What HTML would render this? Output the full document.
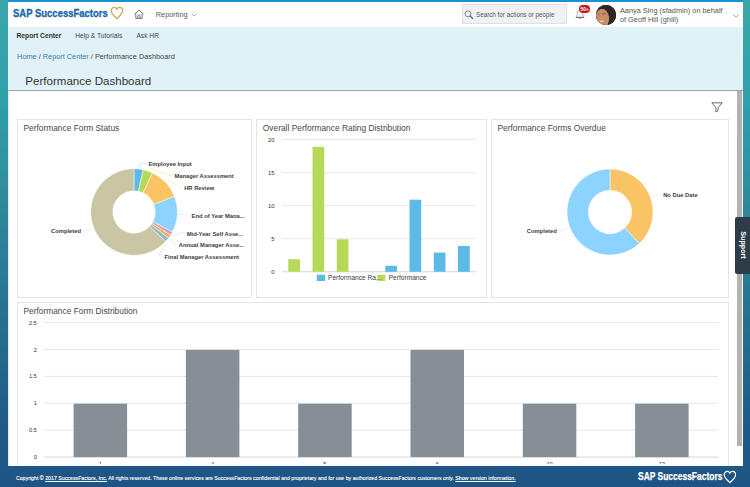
<!DOCTYPE html>
<html lang="en">
<head>
<meta charset="utf-8">
<title>Performance Dashboard</title>
<style>
html,body{margin:0;padding:0}
body{width:750px;height:487px;overflow:hidden;position:relative;font-family:"Liberation Sans",Arial,sans-serif;color:#333;
background:linear-gradient(to bottom,#3aa6aa 0px,#30a0ab 100px,#2e8a9d 200px,#28758f 300px,#215f88 400px,#1e5484 487px);}
.abs{position:absolute}
.t{position:absolute;white-space:nowrap;line-height:1;margin:0}
a{color:inherit}
u{text-decoration-thickness:0.4px;text-underline-offset:0.6px}
#topbar{left:8px;top:0;width:735px;height:2px;background:#1a90d5}
#header{left:8px;top:2px;width:735px;height:24.6px;background:#fff;border-bottom:0.6px solid #d5dadc}
#sub{left:8px;top:27px;width:735px;height:63px;background:#e0f2f7}
#panel{left:8px;top:90px;width:735px;height:376px;background:#fff;border-top:1px solid #9aa3a6;border-left:1px solid #e3e3ee;box-sizing:border-box;overflow:hidden}
#thumb{left:737px;top:91px;width:5px;height:355px;background:#b3b3b3}
.card{position:absolute;box-sizing:border-box;border:1px solid #e4e4e4;background:#fff}
.ctitle{font-size:8.4px;color:#484848}
#search{left:461.6px;top:4.3px;width:105.1px;height:20.1px;box-sizing:border-box;background:#f0f1f4;border:0.6px solid #e0e0e4}
#badge{left:579.2px;top:4.8px;width:10.9px;height:8.7px;border-radius:4.35px;background:#c5191d;color:#fff;font-size:4.8px;font-weight:bold;text-align:center;line-height:9.5px;overflow:hidden}
#avatar{left:596.1px;top:4.5px;width:19.6px;height:20.6px;border-radius:50%;overflow:hidden;background:#2a2320}
#support{left:735px;top:216.5px;width:15px;height:57.5px;background:#2e3c47;border-radius:2px 0 0 2px}
#support span{position:absolute;left:7.2px;top:28.5px;transform:translate(-50%,-50%) rotate(90deg);color:#fff;font-weight:bold;font-size:7.15px;line-height:1;white-space:nowrap}
.charts{position:absolute;left:0;top:0}
</style>
</head>
<body>
<div id="topbar" class="abs"></div>
<div id="header" class="abs"></div>
<div class="t" style="left:13px;top:7.7px;font-size:11.2px;font-weight:bold;color:#1b69ad;-webkit-text-stroke:0.35px #1b69ad;transform:scaleX(0.848);transform-origin:0 0">SAP SuccessFactors</div>
<svg class="abs" style="left:110.1px;top:6.1px" width="13.8" height="13.8" viewBox="0 0 15 15"><path d="M7.5 13.8 C5.2 11.4 1.3 8.6 1.3 5.2 C1.3 3.1 2.8 1.4 4.6 1.4 C5.9 1.4 7 2.3 7.5 3.4 C8 2.3 9.1 1.4 10.4 1.4 C12.2 1.4 13.7 3.1 13.7 5.2 C13.7 8.6 9.8 11.4 7.5 13.8 Z" fill="none" stroke="#d3a54c" stroke-width="1.35"/></svg>
<svg class="abs" style="left:134px;top:9.2px" width="10" height="10" viewBox="0 0 10 10"><path d="M0.5 5.2 L5 1 L9.5 5.2 M1.8 4.4 V9.4 H8.2 V4.4 M3.9 9.4 V7 A1.1 1.1 0 0 1 6.1 7 V9.4" fill="none" stroke="#6c6c6c" stroke-width="0.9" stroke-linejoin="round"/></svg>
<div class="t" style="left:155.7px;top:10.8px;font-size:7.4px;color:#585858">Reporting</div>
<svg class="abs" style="left:190.5px;top:12.9px" width="6" height="4" viewBox="0 0 6 4"><path d="M0.6 0.7 L3 3.1 L5.4 0.7" fill="none" stroke="#888" stroke-width="0.7"/></svg>

<div id="search" class="abs"></div>
<svg class="abs" style="left:464px;top:9.8px" width="10" height="10" viewBox="0 0 10 10"><circle cx="4" cy="3.8" r="3" fill="none" stroke="#687080" stroke-width="0.8"/><path d="M6.2 6 L8.6 8.5" stroke="#586070" stroke-width="1.1" stroke-linecap="round"/></svg>
<div class="t" style="left:476px;top:11.7px;font-size:6.27px;color:#555">Search for actions or people</div>
<svg class="abs" style="left:574.5px;top:9.3px" width="10" height="11" viewBox="0 0 10 11"><path d="M0.9 8.4 C2.1 7.4 2.1 5.8 2.3 4.2 C2.5 2.3 3.6 1.3 5 1.3 C6.4 1.3 7.5 2.3 7.7 4.2 C7.9 5.8 7.9 7.4 9.1 8.4 Z" fill="none" stroke="#8a8a8a" stroke-width="0.7" stroke-linejoin="round"/><path d="M0.9 8.4 H9.1" stroke="#555" stroke-width="0.8"/><path d="M3.9 9.2 A1.2 1.1 0 0 0 6.1 9.2 Z" fill="#444"/></svg>
<div id="badge" class="abs">50+</div>
<div id="avatar" class="abs"><svg width="20" height="20" viewBox="0 0 20 20"><rect width="20" height="20" fill="#2d2622"/><ellipse cx="6.4" cy="13.4" rx="6.9" ry="9.6" fill="#c78e6c" transform="rotate(-6 6.4 13.4)"/><path d="M0 7.5 C2 4.2 5 3.4 8 3.6 C10.5 3.8 12.4 4.6 13.4 6.5 L13.5 2 L0 2 Z" fill="#2d2622"/><ellipse cx="8" cy="8.9" rx="2.3" ry="1.1" fill="#9c5a4e" opacity="0.7"/><ellipse cx="3" cy="9.4" rx="1.3" ry="0.8" fill="#9c5a4e" opacity="0.5"/><ellipse cx="5.6" cy="16.4" rx="2.5" ry="0.8" fill="#e6c6b0" transform="rotate(-10 5.6 16.4)"/><path d="M12.9 5 C14.2 9 13.8 14 11.8 19 L12 21 L20 21 L20 3 Z" fill="#2d2622"/></svg></div>
<div class="t" style="left:619.9px;top:7px;font-size:7.37px;color:#555">Aanya Sing (sfadmin) on behalf</div>
<div class="t" style="left:619.9px;top:16.1px;font-size:7.37px;color:#555">of Geoff Hill (ghill)</div>
<svg class="abs" style="left:732.8px;top:14px" width="6" height="4" viewBox="0 0 6 4"><path d="M0.6 0.7 L3 3.1 L5.4 0.7" fill="none" stroke="#777" stroke-width="0.7"/></svg>

<div id="sub" class="abs"></div>
<div class="t" style="left:16.4px;top:33.1px;font-size:6.77px;font-weight:bold;color:#333">Report Center</div>
<div class="t" style="left:75.2px;top:33.1px;font-size:6.68px;color:#444">Help &amp; Tutorials</div>
<div class="t" style="left:136.4px;top:33.1px;font-size:6.68px;color:#444">Ask HR</div>
<div class="t" style="left:17.1px;top:52.7px;font-size:7.33px;color:#444"><span style="color:#3b7aa9">Home</span> / <span style="color:#3b7aa9">Report Center</span> / Performance Dashboard</div>
<h1 class="t" style="left:25.3px;top:75.9px;font-size:11.57px;font-weight:normal;color:#333">Performance Dashboard</h1>

<div id="panel" class="abs"></div>
<div id="thumb" class="abs"></div>
<svg class="abs" style="left:710.5px;top:101.5px" width="12" height="11" viewBox="0 0 12 11"><path d="M0.8 0.8 H11.2 L7.1 5.6 V8.6 L4.9 10 V5.6 Z" fill="none" stroke="#444" stroke-width="0.8" stroke-linejoin="round"/></svg>

<div class="card" style="left:17px;top:119.2px;width:235.4px;height:178.6px"></div>
<div class="card" style="left:256.3px;top:119.2px;width:231.2px;height:178.6px"></div>
<div class="card" style="left:491px;top:119.2px;width:237.5px;height:178.6px"></div>
<div class="card" style="left:17px;top:301.8px;width:711.5px;height:164.2px;border-bottom:none"></div>
<div class="t ctitle" style="left:23.4px;top:123.9px">Performance Form Status</div>
<div class="t ctitle" style="left:262.8px;top:123.9px">Overall Performance Rating Distribution</div>
<div class="t ctitle" style="left:497.4px;top:123.9px">Performance Forms Overdue</div>
<div class="t ctitle" style="left:23.4px;top:306.6px">Performance Form Distribution</div>

<div class="abs" style="left:0;top:0;width:750px;height:464.4px;overflow:hidden">
<svg class="charts" width="750" height="466" viewBox="0 0 750 466" font-family="Liberation Sans, Arial, sans-serif">
<g id="donut-status">
<path d="M134.00 168.70A43.3 43.3 0 0 1 143.15 169.68L138.48 191.28A21.2 21.2 0 0 0 134.00 190.80Z" fill="#5cbae6" stroke="#fff" stroke-width="0.5" stroke-linejoin="round"/>
<path d="M143.15 169.68A43.3 43.3 0 0 1 152.57 172.89L143.09 192.85A21.2 21.2 0 0 0 138.48 191.28Z" fill="#b6d957" stroke="#fff" stroke-width="0.5" stroke-linejoin="round"/>
<path d="M152.57 172.89A43.3 43.3 0 0 1 174.42 196.48L153.79 204.40A21.2 21.2 0 0 0 143.09 192.85Z" fill="#fac364" stroke="#fff" stroke-width="0.5" stroke-linejoin="round"/>
<path d="M174.42 196.48A43.3 43.3 0 0 1 172.41 231.99L152.80 221.79A21.2 21.2 0 0 0 153.79 204.40Z" fill="#8cd3ff" stroke="#fff" stroke-width="0.5" stroke-linejoin="round"/>
<path d="M172.41 231.99A43.3 43.3 0 0 1 170.60 235.14L151.92 223.33A21.2 21.2 0 0 0 152.80 221.79Z" fill="#d998cb" stroke="#fff" stroke-width="0.5" stroke-linejoin="round"/>
<path d="M170.60 235.14A43.3 43.3 0 0 1 168.58 238.06L150.93 224.76A21.2 21.2 0 0 0 151.92 223.33Z" fill="#eeb04a" stroke="#fff" stroke-width="0.5" stroke-linejoin="round"/>
<path d="M168.58 238.06A43.3 43.3 0 0 1 165.67 241.53L149.50 226.46A21.2 21.2 0 0 0 150.93 224.76Z" fill="#93b9c6" stroke="#fff" stroke-width="0.5" stroke-linejoin="round"/>
<path d="M165.67 241.53A43.3 43.3 0 1 1 134.00 168.70L134.00 190.80A21.2 21.2 0 1 0 149.50 226.46Z" fill="#cac5a4" stroke="#fff" stroke-width="0.5" stroke-linejoin="round"/>
<polyline points="139.1,169 139.8,164 142.6,163.3 146,163.6" fill="none" stroke="#5cbae6" stroke-width="0.55" stroke-opacity="0.55"/>
<polyline points="148.2,169.9 150.1,168.3 168.3,175.1 172,175.6" fill="none" stroke="#b6d957" stroke-width="0.55" stroke-opacity="0.55"/>
<polyline points="167.3,181.6 169.7,180.2 178.6,186.7 182,187.3" fill="none" stroke="#fac364" stroke-width="0.55" stroke-opacity="0.55"/>
<polyline points="178,214.3 188.5,215" fill="none" stroke="#8cd3ff" stroke-width="0.55" stroke-opacity="0.55"/>
<polyline points="172.5,234.5 175.6,235.7 181.1,232.3 184,233.2" fill="none" stroke="#d998cb" stroke-width="0.55" stroke-opacity="0.55"/>
<polyline points="170.7,238.8 173.1,242.5 176,244.6" fill="none" stroke="#eeb04a" stroke-width="0.55" stroke-opacity="0.55"/>
<polyline points="167,243.1 158.3,254.8 162,256.3" fill="none" stroke="#93b9c6" stroke-width="0.55" stroke-opacity="0.55"/>
<polyline points="91,229.2 86,230.8 83,230.8" fill="none" stroke="#cac5a4" stroke-width="0.55" stroke-opacity="0.55"/>
<text x="148.5" y="166.4" font-size="5.8" text-anchor="start" font-weight="bold" fill="#3c3c3c">Employee Input</text>
<text x="174.4" y="177.5" font-size="5.8" text-anchor="start" font-weight="bold" fill="#3c3c3c">Manager Assessment</text>
<text x="184.2" y="189.6" font-size="5.8" text-anchor="start" font-weight="bold" fill="#3c3c3c">HR Review</text>
<text x="191.6" y="217.9" font-size="5.8" text-anchor="start" font-weight="bold" fill="#3c3c3c">End of Year Mana...</text>
<text x="186.7" y="235.9" font-size="5.8" text-anchor="start" font-weight="bold" fill="#3c3c3c">Mid-Year Self Asse...</text>
<text x="178.8" y="247.2" font-size="5.8" text-anchor="start" font-weight="bold" fill="#3c3c3c">Annual Manager Asse...</text>
<text x="164.5" y="258.8" font-size="5.8" text-anchor="start" font-weight="bold" fill="#3c3c3c">Final Manager Assessment</text>
<text x="81" y="233.1" font-size="5.8" text-anchor="end" font-weight="bold" fill="#3c3c3c">Completed</text>
</g>
<g id="bar-rating">
<line x1="282" y1="271.80" x2="476" y2="271.80" stroke="#bfc6c9" stroke-width="0.7"/>
<text x="274.5" y="273.90000000000003" font-size="5.8" text-anchor="end" fill="#333">0</text>
<line x1="282" y1="238.75" x2="476" y2="238.75" stroke="#d8dde0" stroke-width="0.7"/>
<text x="274.5" y="240.85" font-size="5.8" text-anchor="end" fill="#333">5</text>
<line x1="282" y1="205.70" x2="476" y2="205.70" stroke="#d8dde0" stroke-width="0.7"/>
<text x="274.5" y="207.8" font-size="5.8" text-anchor="end" fill="#333">10</text>
<line x1="282" y1="172.65" x2="476" y2="172.65" stroke="#d8dde0" stroke-width="0.7"/>
<text x="274.5" y="174.75000000000003" font-size="5.8" text-anchor="end" fill="#333">15</text>
<line x1="282" y1="139.60" x2="476" y2="139.60" stroke="#d8dde0" stroke-width="0.7"/>
<text x="274.5" y="141.70000000000002" font-size="5.8" text-anchor="end" fill="#333">20</text>
<rect x="288.27" y="259.18" width="11.7" height="12.62" fill="#b6d957"/>
<rect x="312.52" y="146.81" width="11.7" height="124.99" fill="#b6d957"/>
<rect x="336.77" y="239.35" width="11.7" height="32.45" fill="#b6d957"/>
<rect x="385.27" y="265.79" width="11.7" height="6.01" fill="#5cbae6"/>
<rect x="409.52" y="199.69" width="11.7" height="72.11" fill="#5cbae6"/>
<rect x="433.77" y="252.57" width="11.7" height="19.23" fill="#5cbae6"/>
<rect x="458.02" y="245.96" width="11.7" height="25.84" fill="#5cbae6"/>
<rect x="316.8" y="274.7" width="8.4" height="6.3" fill="#5cbae6"/>
<rect x="377.3" y="274.7" width="8" height="6.3" fill="#b6d957"/>
<text x="328" y="280.2" font-size="6.6" text-anchor="start" fill="#3c3c3c">Performance Ra...</text>
<text x="388.7" y="280.2" font-size="6.6" text-anchor="start" fill="#3c3c3c">Performance</text>
</g>
<g id="donut-overdue">
<path d="M610.00 169.00A43 43 0 0 1 639.33 243.45L624.80 227.87A21.7 21.7 0 0 0 610.00 190.30Z" fill="#fac364" stroke="#fff" stroke-width="0.5" stroke-linejoin="round"/>
<path d="M639.33 243.45A43 43 0 1 1 610.00 169.00L610.00 190.30A21.7 21.7 0 1 0 624.80 227.87Z" fill="#8cd3ff" stroke="#fff" stroke-width="0.5" stroke-linejoin="round"/>
<polyline points="652.5,198 657,194.5 660,194.5" fill="none" stroke="#fac364" stroke-width="0.55" stroke-opacity="0.55"/>
<polyline points="567.5,228 562,230.8 559,230.8" fill="none" stroke="#8cd3ff" stroke-width="0.55" stroke-opacity="0.55"/>
<text x="663.2" y="196.6" font-size="5.8" text-anchor="start" font-weight="bold" fill="#3c3c3c">No Due Date</text>
<text x="556.8" y="232.9" font-size="5.8" text-anchor="end" font-weight="bold" fill="#3c3c3c">Completed</text>
</g>
<g id="bar-dist">
<line x1="44.2" y1="457.10" x2="718" y2="457.10" stroke="#bfc6c9" stroke-width="0.7"/>
<text x="36.8" y="459.15000000000003" font-size="5.7" text-anchor="end" fill="#333">0</text>
<line x1="44.2" y1="430.20" x2="718" y2="430.20" stroke="#d8dde0" stroke-width="0.7"/>
<text x="36.8" y="432.25000000000006" font-size="5.7" text-anchor="end" fill="#333">0.5</text>
<line x1="44.2" y1="403.30" x2="718" y2="403.30" stroke="#d8dde0" stroke-width="0.7"/>
<text x="36.8" y="405.35" font-size="5.7" text-anchor="end" fill="#333">1</text>
<line x1="44.2" y1="376.40" x2="718" y2="376.40" stroke="#d8dde0" stroke-width="0.7"/>
<text x="36.8" y="378.45000000000005" font-size="5.7" text-anchor="end" fill="#333">1.5</text>
<line x1="44.2" y1="349.50" x2="718" y2="349.50" stroke="#d8dde0" stroke-width="0.7"/>
<text x="36.8" y="351.55" font-size="5.7" text-anchor="end" fill="#333">2</text>
<line x1="44.2" y1="322.60" x2="718" y2="322.60" stroke="#d8dde0" stroke-width="0.7"/>
<text x="36.8" y="324.65000000000003" font-size="5.7" text-anchor="end" fill="#333">2.5</text>
<rect x="73.60" y="403.70" width="53.5" height="53.40" fill="#868f95"/>
<text x="100.35" y="466.0" font-size="5.7" text-anchor="middle" fill="#333">1</text>
<rect x="185.90" y="349.90" width="53.5" height="107.20" fill="#868f95"/>
<text x="212.65" y="466.0" font-size="5.7" text-anchor="middle" fill="#333">4</text>
<rect x="298.20" y="403.70" width="53.5" height="53.40" fill="#868f95"/>
<text x="324.95" y="466.0" font-size="5.7" text-anchor="middle" fill="#333">5</text>
<rect x="410.50" y="349.90" width="53.5" height="107.20" fill="#868f95"/>
<text x="437.25" y="466.0" font-size="5.7" text-anchor="middle" fill="#333">6</text>
<rect x="522.80" y="403.70" width="53.5" height="53.40" fill="#868f95"/>
<text x="549.55" y="466.0" font-size="5.7" text-anchor="middle" fill="#333">10</text>
<rect x="635.10" y="403.70" width="53.5" height="53.40" fill="#868f95"/>
<text x="661.85" y="466.0" font-size="5.7" text-anchor="middle" fill="#333">13</text>
</g>
</svg>
</div>

<div id="support" class="abs"><span>Support</span></div>

<div class="t" id="foot" style="left:15.9px;top:475.6px;font-size:5.26px;color:#fff;-webkit-text-stroke:0.12px #fff">Copyright © <u>2017 SuccessFactors, Inc.</u> All rights reserved. These online services are SuccessFactors confidential and proprietary and for use by authorized SuccessFactors customers only. <u>Show version information.</u></div>
<div class="t" style="left:637.5px;top:471.9px;font-size:10px;font-weight:bold;color:#fff;-webkit-text-stroke:0.25px #fff;transform:scaleX(0.845);transform-origin:0 0">SAP SuccessFactors</div>
<svg class="abs" style="left:722.7px;top:470.3px" width="13.8" height="13.8" viewBox="0 0 15 15"><path d="M7.5 13.8 C5.2 11.4 1.3 8.6 1.3 5.2 C1.3 3.1 2.8 1.4 4.6 1.4 C5.9 1.4 7 2.3 7.5 3.4 C8 2.3 9.1 1.4 10.4 1.4 C12.2 1.4 13.7 3.1 13.7 5.2 C13.7 8.6 9.8 11.4 7.5 13.8 Z" fill="none" stroke="#fff" stroke-width="1.3"/></svg>
</body>
</html>
